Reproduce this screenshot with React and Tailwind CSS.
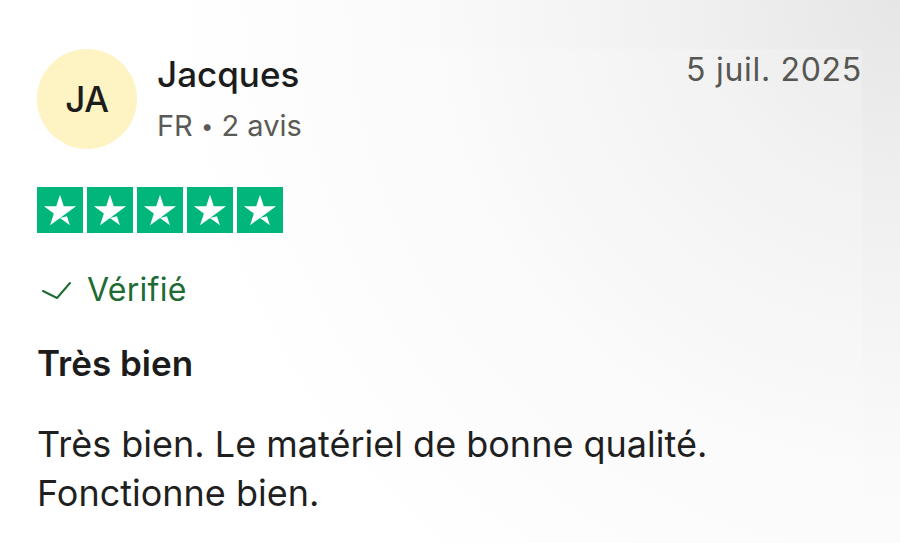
import React from 'react';

const Star = () => (
  <div className="w-[46px] h-[46px] bg-[#00b67a] flex items-center justify-center">
    <svg viewBox="0 0 96 96" className="w-[46px] h-[46px]">
      <path
        fill="#fff"
        d="M48 64.7L62.6 61l6.1 18.8zm33.6-24.3H55.9L48 16.2l-7.9 24.2H14.4l20.8 15-7.9 24.2 20.8-15 12.8-9.2 20.7-15z"
      />
    </svg>
  </div>
);

export default function App() {
  return (
    <div className="w-[900px] h-[543px] overflow-hidden bg-[radial-gradient(circle_at_100%_0%,#e6e6e6_0%,#f0f0f0_20%,#fafafa_45%,#ffffff_70%)] font-['Inter',sans-serif] text-[#1c1c1c]">
      <div className="ml-[37px] mr-[38px] mt-[49px] h-[494px] bg-[#fdfdfd]/20">
        {/* header */}
        <div className="flex items-start">
          <div className="w-[100px] h-[100px] rounded-full bg-[#fdf3c3] flex items-center justify-center text-[35px] font-medium tracking-[-0.5px]">
            JA
          </div>
          <div className="ml-[20px] flex flex-col">
            <div className="text-[35px] leading-[40px] font-medium mt-[5px]">Jacques</div>
            <div className="text-[29px] leading-[36px] text-[#5a5a56] mt-[14px]">
              FR <span className="text-[22px] align-[2px]">•</span> 2 avis
            </div>
          </div>
          <div className="ml-auto mt-[1px] text-[32px] leading-[40px] text-[#575752] tracking-[0.7px]">
            5 juil. 2025
          </div>
        </div>

        {/* stars */}
        <div className="flex gap-[4px] mt-[38px]">
          <Star />
          <Star />
          <Star />
          <Star />
          <Star />
        </div>

        {/* verified */}
        <div className="flex items-center mt-[39px]">
          <svg width="30" height="20" viewBox="0 0 30 20" className="ml-[4px]" fill="none">
            <polyline points="2,11 16,18 29,3" stroke="#1f6b34" strokeWidth="2" strokeLinejoin="round" strokeLinecap="round" />
          </svg>
          <span className="ml-[16px] text-[32px] leading-[36px] text-[#1f6b34] tracking-[0.3px]">Vérifié</span>
        </div>

        {/* title */}
        <div className="mt-[33px] text-[35px] leading-[44px] font-semibold">Très bien</div>

        {/* body */}
        <p className="mt-[35px] text-[36px] leading-[49px] text-[#1f1f1f]">
          Très bien. Le matériel de bonne qualité.
          <br />
          Fonctionne bien.
        </p>
      </div>
    </div>
  );
}
